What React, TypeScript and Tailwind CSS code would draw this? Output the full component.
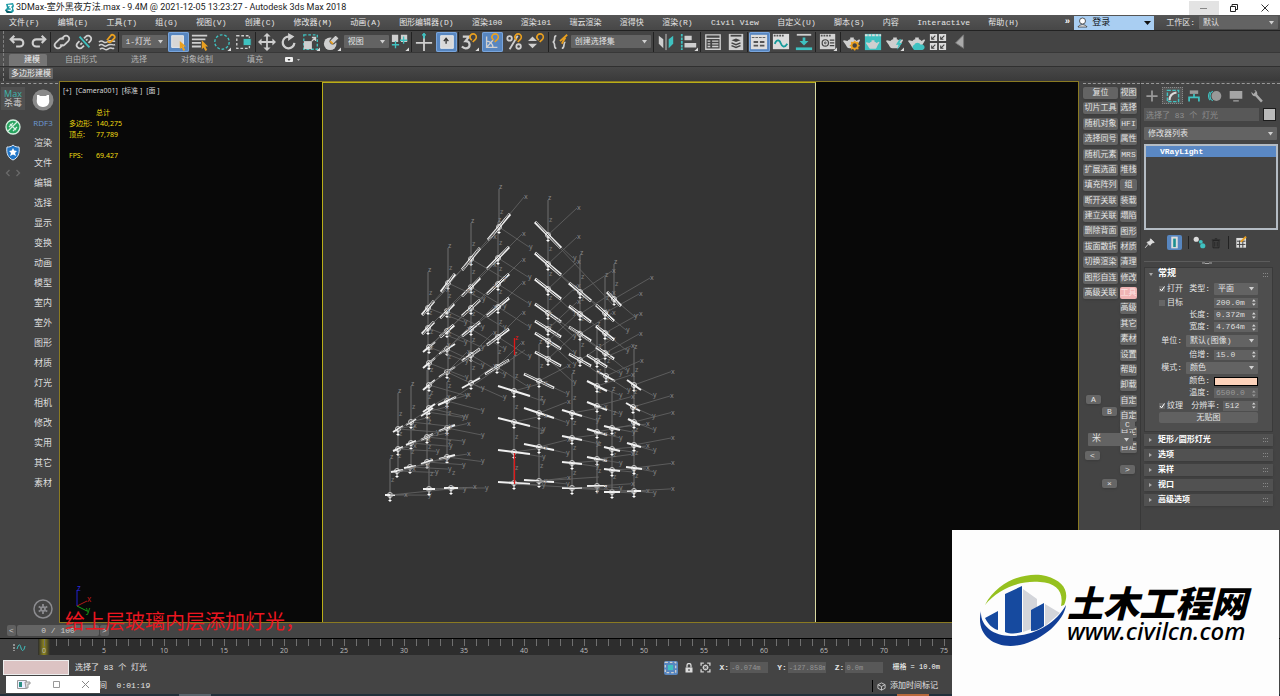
import React from "react";

const TEAL = "#3fc1c0";
const ORANGE = "#e9a020";
const LIGHT = "#cfcfcf";

/* ---------- small shared controls ---------- */

function Icon({ children, size = 18 }: { children: React.ReactNode; size?: number }) {
  return (
    <svg width={size} height={size} viewBox="0 0 20 20" fill="none" stroke={LIGHT} strokeWidth="2" aria-hidden="true" className="shrink-0">
      {children}
    </svg>
  );
}

function Drop({ label, value, className }: { label: string; value: string; className: string }) {
  return (
    <div className={`relative flex items-center ${className}`}>
      <select aria-label={label} className="h-full w-full cursor-default appearance-none rounded-[1px] bg-[#636363] pl-1 pr-2 text-[#e2e2e2] outline-none">
        <option>{value}</option>
      </select>
      <svg width="5" height="4" viewBox="0 0 5 4" className="pointer-events-none absolute right-1" aria-hidden="true">
        <path d="M0 0h5L2.500 3.500z" fill="#d0d0d0" />
      </svg>
    </div>
  );
}

function Tool({ name, active, children }: { name: string; active?: boolean; children: React.ReactNode }) {
  return (
    <button
      type="button"
      title={name}
      className={`flex h-5 w-[21px] shrink-0 items-center justify-center rounded-[2px] ${active ? "bg-[#5786c0] ring-1 ring-inset ring-[#79a5dc]" : ""}`}
    >
      <Icon>{children}</Icon>
    </button>
  );
}

function Group({ className, children }: { className: string; children: React.ReactNode }) {
  return <div className={`flex h-5 shrink-0 items-center justify-around border-r border-[#222] ${className}`}>{children}</div>;
}

const corner = <path d="M20 16v4h-4z" fill="#ddd" stroke="none" />;
const magnet = <path d="M12 8l-1-1a3.500 3.500 0 0 1 5-5 3.500 3.500 0 0 1 0 5l-3 3" stroke={ORANGE} strokeWidth="1.800" />;
const pot = (
  <path d="M5 9c1-3 9-3 10 0l3-2 1 1-3 5c-1 3-2 4-3 4H7c-2 0-3-2-4-4L0 9l1-1 4 1zM8 5h4v2H8z" fill={LIGHT} stroke="none" />
);

/* ---------- top bars ---------- */

const menus = [
  "文件(F)", "编辑(E)", "工具(T)", "组(G)", "视图(V)", "创建(C)", "修改器(M)", "动画(A)", "图形编辑器(D)", "渲染100", "渲染101",
  "瑞云渲染", "渲得快", "渲染(R)", "Civil View", "自定义(U)", "脚本(S)", "内容", "Interactive", "帮助(H)",
];

function TitleBar() {
  return (
    <header className="flex h-[15px] items-center bg-white pl-[5px] text-[#222]">
      <svg width="10" height="10" viewBox="0 0 10 10" aria-hidden="true">
        <path d="M1 1l7-1 1 3-1 2 1 3-2 2H2L0 7l2-2z" fill="#1d9aa4" />
        <path d="M3 2.500h3.500L5 4.500c2 0 2 3 0 3H2.500" stroke="#fff" fill="none" strokeWidth="1.300" />
        <path d="M0 7l2 3h5l-3-2z" fill="#0b5a66" />
      </svg>
      <h1 className="ml-px whitespace-nowrap font-[Roboto,Noto_Sans_CJK_SC,sans-serif] text-[9px] leading-[15px]">
        3DMax-室外黑夜方法.max - 9.4M @ 2021-12-05 13:23:27 - Autodesk 3ds Max 2018
      </h1>
      <div className="ml-auto flex">
        <button type="button" aria-label="最小化" className="flex h-[14px] w-[30px] items-center justify-center bg-[#e3e3e3]">
          <svg width="8" height="8" viewBox="0 0 8 8"><path d="M0 4.500h7" stroke="#888" /></svg>
        </button>
        <button type="button" aria-label="还原" className="flex h-[14px] w-[30px] items-center justify-center">
          <svg width="8" height="8" viewBox="0 0 8 8" fill="none" stroke="#222"><path d="M.5 2.500h5v5h-5zM2 2.500v-2h5.500v5H6" /></svg>
        </button>
        <button type="button" aria-label="关闭" className="flex h-[14px] w-[31px] items-center justify-center">
          <svg width="8" height="8" viewBox="0 0 8 8" stroke="#333"><path d="M.5.5l7 7m0-7l-7 7" /></svg>
        </button>
      </div>
    </header>
  );
}

function MenuBar() {
  return (
    <nav className="flex h-4 items-center border-b border-[#222] bg-gradient-to-b from-[#555] to-[#474747] pl-[9px] text-[#e6e6e6]">
      <div className="flex w-[1010px] justify-between">
        {menus.map((m) => (
          <button key={m} type="button" className="shrink-0 whitespace-nowrap">{m}</button>
        ))}
      </div>
      <div className="ml-auto flex shrink-0 items-center">
        <span className="mr-1 text-[9px] font-bold text-white">»</span>
        <button type="button" className="flex h-[14px] w-20 items-center bg-[#a9cef2] px-[3px] text-[9px] text-[#111]">
          <svg width="11" height="11" viewBox="0 0 11 11" fill="#fff" stroke="#333" strokeWidth=".8" aria-hidden="true">
            <circle cx="5.500" cy="4" r="3" /><path d="M1 10c1-3 8-3 9 0z" />
          </svg>
          <span className="ml-1 mr-auto leading-[14px]">登录</span>
          <svg width="7" height="4" viewBox="0 0 7 4" aria-hidden="true"><path d="M0 0h7L3.500 4z" fill="#111" /></svg>
        </button>
        <span className="ml-3 mr-1 text-[8px]">工作区:</span>
        <Drop label="工作区" value="默认" className="mr-[2px] h-[13px] w-[79px]" />
      </div>
    </nav>
  );
}

function Handle() {
  return <div className="mr-[2px] h-full w-px shrink-0 border-l border-dashed border-[#808080]" />;
}

function Toolbar() {
  return (
    <div className="flex h-[22px] items-center border-b border-[#383838] bg-[#444] pl-[3px]">
      <Handle />
      <Group className="w-[45px]">
        <Tool name="撤消"><path d="M7 3L3 7l4 4M3 7h10a4 4 0 0 1 0 8H9" strokeWidth="2.400" /></Tool>
        <Tool name="重做"><path d="M13 3l4 4-4 4m4-4H7a4 4 0 0 0 0 8h4" strokeWidth="2.400" /></Tool>
      </Group>
      <Group className="w-[68px]">
        <Tool name="链接"><path d="M9 7l3-3a3.500 3.500 0 0 1 5 5l-4 4a3.500 3.500 0 0 1-5 0M11 13l-3 3a3.500 3.500 0 0 1-5-5l4-4a3.500 3.500 0 0 1 5 0" /></Tool>
        <Tool name="取消链接">
          <path d="M10 6l2-2a3.500 3.500 0 0 1 5 5l-2 2M10 14l-2 2a3.500 3.500 0 0 1-5-5l2-2M12 8l2-1M6 13l2-2" />
          <path d="M5 4l11 12" stroke={TEAL} />
        </Tool>
        <Tool name="绑定到空间扭曲">
          <path d="M1 10c5-4 5 3 9 0s6 0 9-1M1 14c5-4 5 3 9 0s6 0 9-1M2 18c5-4 5 3 9 0s4 0 7-1" strokeWidth="1.600" />
          <path d="M10 8l4-5a2 2 0 0 1 4 3l-4 4a2 2 0 0 1-3-1" stroke={ORANGE} />
        </Tool>
      </Group>
      <Group className="w-[137px] pl-[2px]">
        <Drop label="选择过滤器" value="1-灯光" className="h-[13px] w-[45px]" />
        <Tool name="选择对象" active>
          <path d="M3 3h13v13H3z" fill="#d6d6d6" stroke="#eee" strokeWidth="1" />
          <path d="M12 9v9l2-2 2 4 2-1-2-4h3z" fill={ORANGE} stroke="none" />
        </Tool>
        <Tool name="按名称选择">
          <path d="M1 3h17M1 7h15M1 11h10M1 15h10" />
          <path d="M12 8v10l2-2 2 4 2-1-2-4h3z" fill={ORANGE} stroke="none" />
        </Tool>
        <Tool name="圆形选择区域"><circle cx="10" cy="10" r="8" stroke={TEAL} strokeWidth="1.500" strokeDasharray="3 2" />{corner}</Tool>
        <Tool name="窗口/交叉">
          <path d="M2 3h14v14H2z" strokeWidth="1.500" strokeDasharray="3 2" />
          <path d="M9 6h9v8H9z" fill={TEAL} stroke="#444" strokeWidth="1" />
        </Tool>
      </Group>
      <Group className="w-[156px]">
        <Tool name="移动"><path d="M10 2v16M2 10h16" /><path d="M10 0l4 4H6zM10 20l4-4H6zM0 10l4-4v8zM20 10l-4-4v8z" fill={LIGHT} stroke="none" /></Tool>
        <Tool name="旋转"><path d="M16 11a6.500 6.500 0 1 1-6-7" strokeWidth="2.500" /><path d="M9 0l7 4-7 5z" fill={LIGHT} stroke="none" /></Tool>
        <Tool name="缩放">
          <path d="M2 2h15v16H2z" stroke={TEAL} strokeDasharray="3 2" strokeWidth="1.500" />
          <path d="M2 9h9v9H2z" fill={LIGHT} stroke="none" /><path d="M11 9l4-4m-4 0h4v4" strokeWidth="1.500" />{corner}
        </Tool>
        <Tool name="放置"><circle cx="8" cy="12" r="7" fill={LIGHT} stroke="none" /><path d="M8 8l6-6 4 4-6 6c-3 1-5-2-4-4z" fill={LIGHT} stroke="#444" strokeWidth="1.200" /><path d="M8 9l3 3" stroke={ORANGE} />{corner}</Tool>
        <Drop label="参考坐标系" value="视图" className="h-[13px] w-[45px]" />
        <Tool name="使用轴点中心">
          <path d="M1 2h7v8H1zM11 2h7v8h-7z" fill={LIGHT} stroke="none" />
          <path d="M5 9v8M1 13h8M14 4v8M10 8h8" stroke={TEAL} strokeWidth="1.500" />{corner}
        </Tool>
      </Group>
      <Group className="w-[47px]">
        <Tool name="选择并操纵"><path d="M1 11h18M10 3v17" /><path d="M10 0v6M8 2h4" stroke={TEAL} /></Tool>
        <Tool name="键盘快捷键覆盖" active><path d="M3 3h14v14H3z" fill="#d9d9d9" stroke="#eee" strokeWidth="1" /><path d="M9 12V7M6.500 9L9 6l2.500 3" stroke="#333" strokeWidth="1.500" /></Tool>
      </Group>
      <Group className="w-[90px]">
        <Tool name="捕捉开关"><path d="M2 4h7L5 9c6 0 6 8 0 8-2 0-3-1-4-2" strokeWidth="2.500" />{magnet}{corner}</Tool>
        <Tool name="角度捕捉" active><path d="M4 4v12h12M4 9c4 0 7 3 7 7M4 16l7-8" strokeWidth="1.500" />{magnet}</Tool>
        <Tool name="百分比捕捉"><circle cx="4" cy="6" r="2.500" /><circle cx="14" cy="15" r="2.500" /><path d="M13 3L4 18" />{magnet}</Tool>
        <Tool name="微调器捕捉"><path d="M5 4l5 5H0zM5 17l5-5H0z" fill={LIGHT} stroke="none" />{magnet}</Tool>
      </Group>
      <Group className="w-[105px]">
        <Tool name="编辑命名选择集"><path d="M6 3C2 3 6 9 2 10c4 1 0 7 4 7M12 17c4 0 1-6 4-7" strokeWidth="1.800" /><path d="M10 9l8-7M12 12l4-7" stroke={ORANGE} /></Tool>
        <Drop label="命名选择集" value="创建选择集" className="mr-[2px] h-[13px] w-20" />
      </Group>
      <Group className="w-[47px]">
        <Tool name="镜像"><path d="M2 3l5 4v10l-5-5z" fill={LIGHT} stroke="none" /><path d="M18 3l-5 4v10l5-5z" fill={TEAL} stroke="none" /><path d="M10 1v18" strokeWidth="1" /></Tool>
        <Tool name="对齐"><path d="M2 1v18" stroke={TEAL} strokeDasharray="3 1" /><path d="M5 3h8v5H5zM5 11h13v5H5z" fill={LIGHT} stroke="none" />{corner}</Tool>
      </Group>
      <Group className="w-[47px]">
        <Tool name="场景资源管理器"><path d="M2 2h16v16H2zM2 6h16M4 9h3M9 9h7M4 12h3M9 12h7M4 15h3M9 15h7" strokeWidth="1.500" /></Tool>
        <Tool name="层资源管理器"><path d="M2 1h16v18H2z" fill={LIGHT} stroke="none" /><path d="M4 3h12" stroke="#444" /><path d="M10 6l5 2-5 2-5-2z" fill="#444" stroke="none" /><path d="M5 11l5 2 5-2M5 14l5 2 5-2" stroke="#444" strokeWidth="1.600" /></Tool>
      </Group>
      <Group className="w-[68px]">
        <Tool name="功能区" active><path d="M1 2h18v16H1z" fill="#ddd" stroke="none" /><path d="M2 5h16" stroke="#555" strokeWidth="1" strokeDasharray="3 1" /><path d="M4 10h5M11 10h5M4 14h5M11 14h5" stroke="#555" /></Tool>
        <Tool name="曲线编辑器"><path d="M1 1h18v17H1z" fill="#ddd" stroke="none" /><path d="M2 3h12" stroke="#555" strokeDasharray="2 1" /><path d="M3 12c3-7 6-3 7 0s4 5 7 0" stroke="#159b9b" /></Tool>
        <Tool name="图解视图"><path d="M2 1h16v2H2z" fill={LIGHT} stroke="none" /><path d="M1 16h18v3H1z" fill={TEAL} stroke="none" /><path d="M10 5v6" strokeWidth="3" stroke={TEAL} /><path d="M5 9h10l-5 5z" fill={TEAL} stroke="none" /></Tool>
      </Group>
      <Group className="w-[25px]">
        <Tool name="材质编辑器"><path d="M1 1h17v17H1z" fill="#d3d3d3" stroke="none" /><path d="M2 3h11" stroke="#555" strokeDasharray="2 1" /><circle cx="7" cy="11" r="3.500" stroke="#444" strokeWidth="1.300" /><circle cx="7" cy="11" r="1" stroke="#444" strokeWidth="1" /><path d="M12 8h5M12 11h5M12 14h5" stroke="#444" strokeWidth="1.300" />{corner}</Tool>
      </Group>
      <div className="flex w-[130px] shrink-0 items-center justify-around">
        <Tool name="渲染设置">{pot}<circle cx="13" cy="14" r="3.500" stroke={ORANGE} fill="#444" /><path d="M13 8.500v2M13 17.500v2M7.500 14h2M16.500 14h2M9 10l1.500 1.500M15.500 16.500L17 18M17 10l-1.500 1.500M10.500 16.500L9 18" stroke={ORANGE} strokeWidth="1.500" /></Tool>
        <Tool name="渲染帧窗口"><path d="M1 1h18v18H1z" fill={TEAL} stroke="none" /><path d="M1 2.500h18" stroke="#ddd" strokeDasharray="3 1" /><g transform="translate(2 4) scale(.8)">{pot}</g></Tool>
        <Tool name="渲染产品">{pot}<path d="M15 7l-4 6h3l-2 6 6-8h-3l2-4z" fill={TEAL} stroke="none" />{corner}</Tool>
        <Tool name="在云中渲染">{pot}<path d="M6 18a3 3 0 0 1 1-5c1-3 6-3 7 0 5-1 6 5 2 6H7z" fill={TEAL} stroke="none" /></Tool>
        <Tool name="打开 A360"><path d="M1 1h8v8H1zM11 1h8v8h-8zM1 11h8v8H1zM11 11h8v8h-8z" fill="#ddd" stroke="none" /><path d="M3 7l4-4M3 4v3h3M13 7l4-4M13 4v3h3M3 17l4-4M3 14v3h3M13 17l4-4M13 14v3h3" stroke="#444" strokeWidth="1.200" /></Tool>
        <Tool name="播放"><path d="M14 2L5 11l9 6z" fill="#aaa" stroke="#777" strokeWidth="1" /></Tool>
      </div>
    </div>
  );
}

function Ribbon() {
  const tabs = ["自由形式", "选择", "对象绘制", "填充"];
  return (
    <section className="text-[8px]">
      <div className="flex h-[13px] items-center bg-[#525252] pl-[3px] text-[#b5b5b5]">
        <Handle />
        <button type="button" className="ml-[3px] h-[12px] w-[38px] rounded-t-[2px] bg-[#757575] pl-2 text-[#f0f0f0]">建模</button>
        <div className="ml-[18px] flex gap-[34px]">
          {tabs.map((t) => <button key={t} type="button" className="shrink-0">{t}</button>)}
        </div>
        <button type="button" aria-label="功能区选项" className="ml-[22px] flex items-center gap-1">
          <svg width="16" height="6" viewBox="0 0 16 6"><rect width="8" height="5" rx="1" fill="#eee" /><path d="M2.500 2h3L4 4z" fill="#333" /><path d="M12 2h3l-1.500 2z" fill="#bbb" /></svg>
        </button>
      </div>
      <div className="flex h-[15px] items-start border-t border-[#303030] bg-gradient-to-b from-[#484848] to-[#3a3a3a] pl-[3px] pt-px">
        <Handle />
        <button type="button" className="ml-[3px] h-[11px] w-[44px] rounded-[1px] bg-[#666] leading-[11px] text-[#eee]">多边形建模</button>
      </div>
    </section>
  );
}

/* ---------- left side ---------- */

const leftMenu = ["渲染", "文件", "编辑", "选择", "显示", "变换", "动画", "模型", "室内", "室外", "图形", "材质", "灯光", "相机", "修改", "实用", "其它", "素材"];

function Grip() {
  return <div className="h-px w-full border-t border-dashed border-[#999]" />;
}

function LeftBars() {
  return (
    <aside className="flex shrink-0 bg-[#444] pl-px pt-[2px]">
      <div className="flex w-6 flex-col items-center">
        <Grip />
        <button type="button" className="mt-[3px] flex h-[23px] w-6 flex-col items-center justify-center bg-[#505050] text-[9px] leading-[11px] text-[#ccc]">
          <span className="font-[Open_Sans,sans-serif] text-[#3fb5ad]">Max</span>
          <span>杀毒</span>
        </button>
        <button type="button" aria-label="病毒查杀" className="mt-2">
          <svg width="18" height="18" viewBox="0 0 18 18"><circle cx="9" cy="9" r="7" fill="#27a35f" stroke="#d5efe0" strokeWidth="1.300" /><path d="M4 13l9-9M5 9l4-4M9 13l4-4M6 6l6 6" stroke="#d5efe0" strokeWidth="1.200" /></svg>
        </button>
        <button type="button" aria-label="防护" className="mt-2">
          <svg width="16" height="17" viewBox="0 0 16 17"><path d="M8 1c2 2 4 2 6 2 1 6-1 11-6 13C3 14 1 9 2 3c2 0 4 0 6-2z" fill="#2176c7" stroke="#d8e6f4" /><path d="M8 4l1.200 2.500L12 7l-2 2 1 3-3-1.500L5 12l1-3-2-2 2.800-.5z" fill="#fff" /></svg>
        </button>
        <div className="mt-2 flex gap-1">
          <svg width="16" height="8" viewBox="0 0 16 8" fill="none" stroke="#6a6a6a" strokeWidth="1.300"><path d="M4.500 1l-3 3 3 3M11.500 1l3 3-3 3" /></svg>
        </div>
      </div>
      <div className="ml-[3px] mr-px flex w-[30px] flex-col items-center">
        <Grip />
        <svg width="22" height="22" viewBox="0 0 22 22" className="mt-[5px]" aria-hidden="true">
          <circle cx="11" cy="11" r="10.500" fill="#8a8a8a" />
          <path d="M5 6h2l1 1h6l1-1h2v4c1 4-1 8-6 8s-7-4-6-8z" fill="#fff" />
        </svg>
        <span className="mt-1 h-[19px] font-[Open_Sans,sans-serif] text-[8px] leading-[16px] text-[#6c9ad6]">RDF3</span>
        {leftMenu.map((t) => (
          <button key={t} type="button" className="h-5 text-[9px] leading-5 text-[#dedede]">{t}</button>
        ))}
        <button type="button" aria-label="设置" className="mb-1 mt-auto">
          <svg width="20" height="20" viewBox="0 0 20 20" fill="none" stroke="#8c8c90"><circle cx="10" cy="10" r="9" strokeWidth="1.500" /><circle cx="10" cy="10" r="2" strokeWidth="1.800" /><path d="M10 5v2.500M10 12.500V15M5.700 7.500l2.200 1.300M12.100 11.200l2.200 1.300M5.700 12.500l2.200-1.300M12.100 8.800l2.200-1.300" strokeWidth="1.800" /></svg>
        </button>
      </div>
    </aside>
  );
}

/* ---------- viewport ---------- */

type Column = { top: number; xv: [number, number]; yv: [number, number]; bars: [number, number, number, number][] };

// each bar: centre x, centre y, half extent along x, half extent along y
const columns: Column[] = [
  { top: 189, xv: [25, -30], yv: [30, 20], bars: [[499, 227, 11, -13]] },
  { top: 222, xv: [24, -24], yv: [30, 19], bars: [[498, 258, 11, -11], [498, 284, 11, -10], [498, 307, 11, -9], [498, 337, 11, -8], [497, 367, 12, -7]] },
  { top: 223, xv: [22, -22], yv: [32, 19], bars: [[471, 259, 9, -11], [471, 287, 9, -9], [471, 308, 9, -8], [471, 329, 9, -7], [471, 355, 9, -6], [471, 383, 9, -5]] },
  { top: 248, xv: [20, -20], yv: [34, 16], bars: [[448, 283, 7, -9], [447, 311, 7, -7], [447, 331, 7, -6], [447, 349, 8, -5], [447, 372, 8, -5]] },
  { top: 382, xv: [20, -9], yv: [34, 14], bars: [[447, 401, 9, -4], [447, 428, 8, -3], [447, 457, 8, -2]] },
  { top: 272, xv: [18, -18], yv: [36, 14], bars: [[428, 308, 6, -7], [428, 328, 6, -6], [429, 347, 6, -5], [429, 363, 6, -5], [429, 385, 6, -5], [429, 408, 6, -4]] },
  { top: 370, xv: [18, -8], yv: [35, 9], bars: [[427, 412, 6, -4], [427, 437, 6, -3], [427, 462, 6, -2]] },
  { top: 386, xv: [16, -8], yv: [38, 8], bars: [[411, 422, 5, -3], [411, 443, 5, -2], [410, 467, 6, -1]] },
  { top: 393, xv: [15, -7], yv: [38, 6], bars: [[398, 429, 5, -3], [398, 449, 5, -2], [397, 471, 6, -1]] },
  { top: 459, xv: [14, -4], yv: [38, 1], bars: [[390, 495, 5, 0]] },
  { top: 462, xv: [22, -5], yv: [34, 0], bars: [[429, 489, 6, 0], [451, 488, 7, 0]] },
  { top: 200, xv: [29, -27], yv: [25, 23], bars: [[548, 235, 13, 13], [548, 264, 13, 11], [548, 289, 13, 10], [548, 313, 13, 9], [548, 329, 13, 8], [548, 341, 13, 8], [548, 359, 13, 7]] },
  { top: 255, xv: [32, -21], yv: [26, 19], bars: [[580, 292, 11, 9], [580, 314, 11, 8], [580, 334, 11, 7], [580, 360, 11, 6]] },
  { top: 277, xv: [34, -19], yv: [21, 17], bars: [[605, 313, 9, 8], [605, 333, 9, 7], [605, 353, 9, 6], [606, 376, 9, 5]] },
  { top: 264, xv: [36, -21], yv: [20, 17], bars: [[614, 299, 7, 7]] },
  { top: 326, xv: [34, -15], yv: [22, 12], bars: [[597, 361, 10, 6], [597, 386, 10, 5], [597, 406, 10, 4], [597, 432, 10, 3], [597, 459, 10, 2], [597, 486, 10, 0]] },
  { top: 344, xv: [28, -19], yv: [27, 16], bars: [[539, 381, 15, 7], [539, 413, 15, 5], [539, 447, 15, 3], [539, 481, 15, 1]] },
  { top: 356, xv: [30, -12], yv: [28, 14], bars: [[514, 391, 16, 5], [514, 422, 16, 4], [514, 452, 16, 2], [514, 483, 16, 1]] },
  { top: 374, xv: [32, -10], yv: [24, 12], bars: [[572, 413, 10, 3], [572, 438, 10, 2], [572, 463, 10, 1], [572, 488, 10, 0]] },
  { top: 391, xv: [34, -8], yv: [20, 8], bars: [[612, 428, 8, 2], [612, 449, 8, 2], [612, 470, 8, 1], [612, 492, 8, 0]] },
  { top: 349, xv: [37, -18], yv: [19, 14], bars: [[634, 385, 7, 5], [633, 407, 7, 4], [634, 422, 6, 3], [634, 445, 7, 2], [634, 468, 8, 1], [634, 491, 7, 0]] },
];

function Light({ bar, xv, yv }: { bar: [number, number, number, number]; xv: [number, number]; yv: [number, number] }) {
  const [x, y, dx, dy] = bar;
  // axes flatten out towards the horizon at the bottom of the model
  const flat = y > 375 ? Math.max(0.1, 0.8 - (y - 375) / 170) : 1;
  const xe = [x + xv[0], y + xv[1] * flat];
  const ye = [x + yv[0], y + yv[1] * flat];
  const steep = Math.abs(dy) > 5;
  return (
    <g>
      <path d={`M${xe[0]} ${xe[1]}L${x} ${y}L${ye[0]} ${ye[1]}`} stroke="#666" strokeWidth=".8" fill="none" />
      <text x={xe[0]} y={xe[1] + 2} fill="#858585" fontSize="7">x</text>
      <text x={ye[0]} y={ye[1] + 2} fill="#858585" fontSize="7">y</text>
      <text x={x + 1} y={y - 13} fill="#7c7c7c" fontSize="7">z</text>
      <path d={`M${x - dx} ${y - dy}L${x + dx} ${y + dy}`} stroke="#f0f0f0" strokeWidth={steep ? 3 : 2} />
      {steep && <path d={`M${x - dx + 1} ${y - dy}L${x + dx - 1} ${y + dy}`} stroke="#454545" strokeWidth="1" />}
      <circle cx={x} cy={y} r="2.500" stroke="#eee" strokeWidth=".8" fill="none" />
      <path d={`M${x} ${y}v7M${x - 1.5} ${y + 5.5}h3`} stroke="#fff" strokeWidth="1" />
    </g>
  );
}

function Viewport() {
  return (
    <main className="relative flex min-w-0 flex-1 border border-[#8a7a22] bg-[#080808]">
      <div className="flex min-w-0 flex-1 flex-col justify-between pl-[3px] pt-1 font-[Noto_Sans,Noto_Sans_CJK_SC,sans-serif]">
        <div>
          <div className="flex gap-1 text-[7px] leading-[10px] text-[#d8d8d8]">
            <span>[+]</span><span>[Camera001]</span><span>[标准 ]</span><span>[面 ]</span>
          </div>
          <table className="ml-[6px] mt-[11px] text-left text-[7px] leading-[11px] text-[#f0dc10]">
            <tbody>
              <tr><td className="w-[27px]" /><td>总计</td></tr>
              <tr><td className="whitespace-nowrap">多边形:</td><td>140,275</td></tr>
              <tr><td>顶点:</td><td>77,789</td></tr>
              <tr><td className="h-[10px]" /></tr>
              <tr><td>FPS:</td><td>69.427</td></tr>
            </tbody>
          </table>
        </div>
        <svg width="28" height="38" viewBox="0 0 28 38" className="mb-[3px] ml-[9px]" fill="none" aria-hidden="true">
          <path d="M5 25V9" stroke="#2020d0" /><path d="M5 25l10-5" stroke="#b01818" /><path d="M5 25l10 5" stroke="#18a018" />
          <text x="5" y="10" fill="#2828e0" fontSize="8">z</text><text x="15" y="21" fill="#c01818" fontSize="8">x</text><text x="14" y="32" fill="#18b018" fontSize="8">y</text>
        </svg>
      </div>
      <div className="w-[494px] shrink-0 border-x border-t border-[#b9ae18] border-r-[#d8d8a0] bg-[#343434]">
        <svg viewBox="323 83 492 539" className="block h-full w-full font-[Noto_Sans,sans-serif]" role="img" aria-label="Camera001">
          {columns.map((c, i) => {
            const first = c.bars[0];
            const last = c.bars[c.bars.length - 1];
            return (
              <g key={i}>
                <path d={`M${first[0]} ${c.top}V${last[1]}`} stroke="#6e6e6e" strokeWidth="1" />
                <text x={first[0]} y={c.top} fill="#8a8a8a" fontSize="7">z</text>
              </g>
            );
          })}
          {columns.map((c) => c.bars.map((b) => <Light key={`${b[0]}-${b[1]}`} bar={b} xv={c.xv} yv={c.yv} />))}
          <path d="M448 402L525 350M398 430l30-20M398 450l49-22M397 472l50-15M390 495l60-6M499 227L428 308M498 258l-70 70M498 284l-69 63M498 307l-69 56M498 337l-69 48M548 235l66 71M548 264l57 49M548 313l57 40M514 484l120 7M539 481l60-4" stroke="#666" strokeWidth=".8" />
          <path d="M514.500 338V355M514.500 453V484" stroke="#e01818" strokeWidth="1.300" />
          <text x="515" y="340" fill="#e01818" fontSize="7">z</text>
        </svg>
      </div>
      <div className="min-w-0 flex-1 pl-[3px]" />
      <p className="absolute -bottom-[13px] left-[5px] z-10 whitespace-nowrap font-[Noto_Sans_CJK_SC,sans-serif] text-[20px] leading-[28px] text-[#ea1620]">给上层玻璃内层添加灯光，</p>
    </main>
  );
}

/* ---------- right side ---------- */

const scriptsA = ["复位", "切片工具", "随机对象", "选择同号", "随机元素", "扩展选面", "填充阵列", "断开关联", "建立关联", "删除背面", "拔面散拆", "切换渲染", "图形自连", "高级关联"];
const scriptsB = ["视图", "选择", "HFI", "属性", "MRS", "堆栈", "组", "装载", "塌陷", "图形", "材质", "清理", "修改", "工具", "高级", "其它", "素材", "设置", "帮助", "卸载", "自定", "自定", "自定", "自定"];

const mini = "absolute flex h-[9px] w-[15px] items-center justify-center rounded-[2px] bg-[#666] text-[8px] leading-[9px] text-[#e0e0e0] shadow";

function ScriptBar() {
  const key = "h-3 rounded-[2px] bg-[#646464] text-[8px] leading-3 whitespace-nowrap overflow-hidden shadow-sm";
  return (
    <aside className="relative w-[61px] shrink-0 bg-[#444] pl-1 pt-[2px]">
      <Grip />
      <div className="mt-[3px] flex gap-[2px]">
        <div className="flex h-[212px] w-[35px] flex-col justify-between">
          {scriptsA.map((s) => <button key={s} type="button" className={`${key} text-[#e4e4e4]`}>{s}</button>)}
        </div>
        <div className="flex h-[366px] w-[17px] flex-col justify-between">
          {scriptsB.map((s, i) => (
            <button key={i} type="button" className={s === "工具" ? "h-3 overflow-hidden whitespace-nowrap rounded-[2px] bg-[#f0b4b4] text-[8px] leading-3 text-[#fde4e4]" : `${key} text-[#e4e4e4]`}>{s}</button>
          ))}
        </div>
      </div>
      <button type="button" className={`${mini} left-[7px] top-[314px]`}>A</button>
      <button type="button" className={`${mini} left-[23px] top-[326px]`}>B</button>
      <button type="button" className={`${mini} left-[41px] top-[339px]`}>C</button>
      <div className="absolute left-[9px] top-[352px]"><Drop label="单位" value="米" className="h-[13px] w-[45px] text-[9px]" /></div>
      <button type="button" className={`${mini} left-[6px] top-[370px]`}>&lt;</button>
      <button type="button" className={`${mini} left-[41px] top-[384px]`}>&gt;</button>
      <button type="button" className={`${mini} left-[23px] top-[398px]`}>×</button>
    </aside>
  );
}

function Spin({ id, value, className, dim }: { id: string; value: string; className: string; dim?: boolean }) {
  return (
    <div className={`flex h-[10px] items-center bg-[#616161] px-[2px] ${className}`}>
      <input id={id} defaultValue={value} disabled={dim} className={`w-full min-w-0 bg-transparent text-[8px] leading-[10px] outline-none ${dim ? "text-[#999]" : "text-[#dedede]"}`} />
      <svg width="4" height="7" viewBox="0 0 4 7" aria-hidden="true" fill={dim ? "#999" : "#d8d8d8"}><path d="M0 2.500L2 0l2 2.500zM0 4.500h4L2 7z" /></svg>
    </div>
  );
}

function Row({ label, id, children, h }: { label: string; id: string; children: React.ReactNode; h: string }) {
  return (
    <div className={`flex items-center justify-end gap-1 ${h}`}>
      <label htmlFor={id} className="text-[8px]">{label}:</label>
      {children}
    </div>
  );
}

function Dots() {
  return (
    <svg width="5" height="4" viewBox="0 0 5 4" className="ml-auto" fill="#888" aria-hidden="true"><path d="M0 0h1v1H0zM2 0h1v1H2zM4 0h1v1H4zM0 3h1v1H0zM2 3h1v1H2zM4 3h1v1H4z" /></svg>
  );
}

function Tick({ id, label, on }: { id: string; label: string; on?: boolean }) {
  return (
    <span className="mr-auto flex shrink-0 items-center gap-[2px] whitespace-nowrap">
      <span className="relative flex size-[6px]">
        <input id={id} type="checkbox" defaultChecked={on} className="peer size-[6px] appearance-none bg-[#666]" />
        <svg viewBox="0 0 6 6" className="pointer-events-none absolute inset-0 hidden peer-checked:block" fill="none" stroke="#fff"><path d="M1 3l1.500 2L5.500.5" /></svg>
      </span>
      <label htmlFor={id} className="text-[8px]">{label}</label>
    </span>
  );
}

function CommandPanel() {
  const tab = "flex h-[17px] w-[21px] items-center justify-center";
  return (
    <aside className="w-[140px] shrink-0 border-l border-[#383838] bg-[#444] pt-[2px] text-[#e4e4e4]">
      <Grip />
      <div className="mt-[3px] flex">
        <button type="button" aria-label="创建" className={tab}><Icon size={14}><path d="M10 2v16M2 10h16" stroke="#999" strokeWidth="2.500" /></Icon></button>
        <button type="button" aria-label="修改" className={`${tab} border border-dotted border-[#888] bg-[#555]`}><Icon size={14}><path d="M2 2h16v16H2z" stroke={TEAL} strokeDasharray="5 2" /><path d="M5 16c0-6 4-10 10-11" stroke="#ddd" strokeWidth="3" /></Icon></button>
        <button type="button" aria-label="层次" className={tab}><Icon size={14}><path d="M4 2h12v5H4z" fill="#999" stroke="none" /><path d="M10 7v5M3 18v-6h14v6" stroke={TEAL} strokeWidth="2.500" /></Icon></button>
        <button type="button" aria-label="运动" className={tab}><Icon size={14}><circle cx="12" cy="10" r="7" fill="#999" stroke="none" /><path d="M7 3a8 8 0 0 0 0 14M3 4a9 9 0 0 0 0 12" stroke={TEAL} strokeWidth="1.500" /></Icon></button>
        <button type="button" aria-label="显示" className={tab}><Icon size={14}><path d="M1 3h18v11H1zM6 16h8v2H6z" fill="#a5a5a5" stroke="none" /></Icon></button>
        <button type="button" aria-label="实用程序" className={tab}><Icon size={14}><path d="M7 7l10 11" stroke="#aaa" strokeWidth="3.500" /><path d="M2 4l3 3 3-3-2-3a6 6 0 0 1 4 8c-3 3-8 1-8-5z" fill="#aaa" stroke="none" /></Icon></button>
      </div>
      <div className="pl-[3px]">
        <div className="mr-1 mt-1 flex items-center gap-1">
          <input aria-label="对象名称" disabled defaultValue="选择了 83 个 灯光" className="h-[13px] min-w-0 flex-1 bg-[#585858] px-[2px] text-[8px] text-[#8f8f8f]" />
          <button type="button" aria-label="对象颜色" className="size-[13px] border border-[#1c1c1c] bg-[#b9b9b9]" />
        </div>
        <Drop label="修改器列表" value="修改器列表" className="mr-[3px] mt-[6px] h-[13px] text-[8px]" />
        <ul className="mr-[2px] mt-1 h-[86px] border-2 border-[#b4bcc4] bg-[#444] text-[8px]">
          <li className="h-[11px] bg-[#5a88c4] pl-[14px] font-bold leading-[11px] text-white">VRayLight</li>
        </ul>
        <div className="mr-[10px] mt-1 flex h-[17px] items-center">
          <button type="button" aria-label="锁定堆栈" className="w-[17px]"><Icon size={12}><path d="M11 3l6 6-4 1-3 4-5-5 5-2zM7 12l-5 6" fill="#ddd" stroke="#ddd" strokeWidth="1.500" /></Icon></button>
          <button type="button" aria-label="显示最终结果" className="ml-[6px] flex h-[15px] w-[15px] items-center justify-center rounded-[2px] bg-[#5786c0]"><Icon size={13}><path d="M5 1h10v18H5z" fill="#ddd" stroke="none" /><path d="M10 4v13" stroke="#1b8f90" strokeWidth="4" /></Icon></button>
          <button type="button" aria-label="使唯一" className="ml-[6px] border-l border-[#222] pl-1"><Icon size={13}><circle cx="5" cy="5" r="4" fill="#ddd" stroke="none" /><circle cx="12" cy="9" r="3" fill={TEAL} stroke="none" /><circle cx="15" cy="15" r="4" fill={TEAL} stroke="none" /></Icon></button>
          <button type="button" aria-label="移除修改器" className="ml-1"><Icon size={12}><path d="M3 5h14M8 3h4M5 6h10v12H5zM8 8v8M12 8v8" stroke="#222" strokeWidth="1.500" /></Icon></button>
          <button type="button" aria-label="配置修改器集" className="ml-[6px] border-l border-[#222] pl-[6px]"><Icon size={13}><path d="M2 3h15v15H2z" fill="#ddd" stroke="none" /><path d="M3 8h13M3 13h13M7 7v11M12 7v11" stroke="#444" strokeWidth="1.500" /><path d="M9 9l8-8" stroke={ORANGE} strokeWidth="3" /></Icon></button>
        </div>
        <div className="mr-[10px] mt-[10px] flex h-1 items-center justify-center border-t border-[#5c5c5c]">
          <svg width="10" height="3" viewBox="0 0 10 3" fill="none" stroke="#aaa"><path d="M0 1h3l1 1 1-1 1 1 1-1h3" /></svg>
        </div>

        <section className="mr-[7px] mt-[2px] h-[165px] border border-[#3a3a3a] bg-[#4e4e4e]">
          <h2 className="flex h-[13px] items-center gap-[5px] px-1 text-[9px] font-bold text-white">
            <svg width="4" height="4" viewBox="0 0 4 4" fill="#aaa"><path d="M0 0h4L2 3z" /></svg>常规<Dots />
          </h2>
          <div className="px-[14px]">
            <div className="flex h-[15px] items-center gap-1">
              <Tick id="on" label="打开" on />
              <span className="shrink-0 text-[8px]">类型:</span>
              <Drop label="类型" value="平面" className="h-3 w-[44px] shrink-0 text-[8px]" />
            </div>
            <div className="flex h-[13px] items-center">
              <Tick id="target" label="目标" />
              <Spin id="dist" value="200.0m" className="w-[44px]" />
            </div>
            <Row label="长度" id="len" h="h-3"><Spin id="len" value="0.372m" className="w-[44px]" /></Row>
            <Row label="宽度" id="wid" h="h-3"><Spin id="wid" value="4.764m" className="w-[44px]" /></Row>
            <Row label="单位" id="unit" h="h-[15px]"><Drop label="单位类型" value="默认(图像)" className="h-3 w-[72px] text-[8px]" /></Row>
            <Row label="倍增" id="mul" h="h-[13px]"><Spin id="mul" value="15.0" className="w-[44px]" /></Row>
            <Row label="模式" id="mode" h="h-[14px]"><Drop label="颜色模式" value="颜色" className="h-3 w-[72px] text-[8px]" /></Row>
            <Row label="颜色" id="col" h="h-3"><button id="col" type="button" aria-label="颜色" className="h-[9px] w-[44px] border border-black bg-[#fdd3bb]" /></Row>
            <Row label="温度" id="temp" h="h-3"><Spin id="temp" value="6500.0" className="w-[44px]" dim /></Row>
            <div className="flex h-[13px] items-center gap-[3px]">
              <Tick id="tex" label="纹理" on />
              <label htmlFor="res" className="shrink-0 text-[8px]">分辨率:</label>
              <Spin id="res" value="512" className="w-[35px] shrink-0" />
            </div>
            <button type="button" className="block h-[11px] w-full rounded-[2px] bg-[#616161] text-[8px] leading-[11px]">无贴图</button>
          </div>
        </section>
        <div className="mr-[7px] mt-[2px] flex flex-col gap-[3px]">
          {["矩形/圆形灯光", "选项", "采样", "视口", "高级选项"].map((r) => (
            <button key={r} type="button" className="flex h-3 items-center gap-[5px] bg-[#515151] px-[5px] text-[8px] font-bold text-white shadow-sm">
              <svg width="4" height="4" viewBox="0 0 4 4" fill="#aaa"><path d="M0 0l3 2-3 2z" /></svg>{r}<Dots />
            </button>
          ))}
        </div>
      </div>
    </aside>
  );
}

/* ---------- bottom bars ---------- */

function TimeBars() {
  return (
    <section className="bg-[#444]">
      <div className="flex h-[15px] items-center gap-px pl-[7px] text-[8px] text-[#ccc]">
        <button type="button" aria-label="上一帧" className="h-[11px] w-[9px] rounded-[2px] bg-[#606060] leading-[10px]">&lt;</button>
        <div className="h-[11px] w-[82px] rounded-[2px] bg-[#646464] text-center leading-[11px]">0 / 100</div>
        <button type="button" aria-label="下一帧" className="h-[11px] w-[9px] rounded-[2px] bg-[#606060] leading-[10px]">&gt;</button>
      </div>
      <div className="flex h-[17px] items-stretch border-t border-black">
        <button type="button" aria-label="迷你曲线编辑器" className="flex w-[38px] items-center pl-[13px]">
          <svg width="13" height="9" viewBox="0 0 13 9" fill="none"><path d="M1 1v7" stroke="#aaa" strokeWidth="1.500" strokeDasharray="2 1" /><path d="M4 6c2-6 3-5 4-1s3 3 4-2" stroke={TEAL} /></svg>
        </button>
        <div className="mr-[30px] flex min-w-0 flex-1 bg-[#2d2d2d] font-[Open_Sans,sans-serif] text-[7px] text-[#bdbdbd]">
          {Array.from({ length: 101 }, (_, i) => (
            <div key={i} className={`flex min-w-0 flex-1 flex-col items-center ${i === 0 ? "bg-gradient-to-r from-transparent via-[#8e861d] to-transparent" : ""}`}>
              <div className="h-[7px] w-px shrink-0 bg-[#707070]" />
              {i % 5 === 0 && <span className="w-4 shrink-0 text-center leading-[9px]">{i}</span>}
            </div>
          ))}
        </div>
      </div>
    </section>
  );
}

function Coord({ axis, value }: { axis: string; value: string }) {
  return (
    <label className="flex items-center gap-px">
      <span className="text-[8px] font-bold">{axis}:</span>
      <input disabled defaultValue={value} className="h-[11px] w-[38px] bg-[#585858] px-px text-[7px] text-[#959595]" />
    </label>
  );
}

function StatusBar() {
  return (
    <footer className="relative h-[41px] bg-[#444] text-[8px] text-[#e4e4e4]">
      <div className="flex h-[23px] items-center pl-[3px] pt-[2px]">
        <div className="h-[15px] w-[66px] border border-[#eee] bg-[#dcc3c3]" />
        <p className="ml-[6px]">选择了 83 个 灯光</p>
        <div className="ml-auto mr-[340px] flex shrink-0 items-center gap-[9px]">
          <div className="flex items-center gap-[6px]">
            <button type="button" aria-label="隔离" className="flex size-[14px] items-center justify-center rounded-[2px] bg-[#5786c0]"><Icon size={13}><path d="M2 2h16v16H2z" strokeDasharray="4 3" strokeWidth="2" /><path d="M6 6h8v8H6z" fill={TEAL} stroke="none" /></Icon></button>
            <button type="button" aria-label="锁定选择"><Icon size={10}><path d="M3 9h14v10H3z" fill="#ddd" stroke="none" /><path d="M6 9V5a4 4 0 0 1 8 0v4" stroke="#ddd" strokeWidth="2.500" /><path d="M10 12v4" stroke="#333" /></Icon></button>
            <button type="button" aria-label="绝对模式"><Icon size={11}><path d="M2 7V2h5M13 2h5v5M18 13v5h-5M7 18H2v-5M10 5v3M10 12v3M5 10h3M12 10h3" strokeWidth="2.500" /><circle cx="10" cy="10" r="4" /></Icon></button>
          </div>
          <Coord axis="X" value="-0.074m" />
          <Coord axis="Y" value="-127.858m" />
          <Coord axis="Z" value="0.0m" />
          <span className="text-[7px] text-white">栅格 = 10.0m</span>
        </div>
      </div>
      <div className="flex h-4 items-center justify-end">
        <span className="absolute left-[99px]">间&nbsp; 0:01:19</span>
        <button type="button" className="mr-[342px] flex items-center gap-1 border-l border-black pl-1">
          <svg width="9" height="9" viewBox="0 0 10 10" fill="none" stroke="#ccc"><path d="M5 1l4 2v4L5 9 1 7V3zM1 3l4 2 4-2M5 5v4" /></svg>
          添加时间标记
        </button>
      </div>
      <div className="flex h-[2px] bg-[#22303a]"><div className="ml-[14%] w-8 bg-[#59646c]" /><div className="ml-auto mr-[351px] w-8 bg-[#b8683a]" /></div>
      <div className="absolute bottom-[3px] left-[6px] flex h-[17px] w-[94px] items-center justify-around bg-white">
        <svg width="14" height="9" viewBox="0 0 14 9" aria-hidden="true"><path d="M.5.5h9v8h-9z" fill="#eef" stroke="#999" /><path d="M2 2h3v5H2z" fill="#2b8f83" /><path d="M8 2h5v2h-2v4H9z" fill="#ddd" stroke="#999" /></svg>
        <button type="button" aria-label="最大化"><svg width="7" height="7" viewBox="0 0 7 7" fill="none" stroke="#999"><path d="M.5.5h6v6h-6z" /></svg></button>
        <button type="button" aria-label="关闭窗口"><svg width="7" height="7" viewBox="0 0 7 7" stroke="#888"><path d="M0 0l7 7M7 0L0 7" /></svg></button>
      </div>
    </footer>
  );
}

function SiteBadge() {
  return (
    <a href="#civilcn" className="absolute bottom-0 right-px z-20 flex h-[166px] w-[327px] items-center bg-[#fdfdfd] pl-[26px]">
      <svg width="90" height="74" viewBox="0 0 90 74" className="mb-1 shrink-0" aria-hidden="true">
        <path d="M7 31C20 6 50-3 68 2s24 16 18 29l-3 1C86 17 78 9 62 8 42 6 20 15 7 31z" fill="#96c11f" />
        <path d="M3 37c-1 15 12 25 30 25 24 0 45-13 55-31-2 16-23 35-46 40C18 76-3 62 3 37z" fill="#123f97" />
        <path d="M45 15l14 10v28l-14 5zM67 30l15 9-15 13z" fill="#d3d5da" />
        <path d="M27 20l17-8v46c-6 2-12 2-17 0zM7 44l13-7v19C15 55 10 50 7 44zM53 36l13-7v23c-4 3-9 5-13 5z" fill="#164a9f" />
      </svg>
      <span className="-ml-px flex flex-col whitespace-nowrap italic text-black">
        <strong className="font-[Noto_Sans_CJK_SC,sans-serif] text-[36px] font-black leading-[36px]">土木工程网</strong>
        <span className="font-[Noto_Sans,sans-serif] text-[24px] font-medium leading-[24px]">www.civilcn.com</span>
      </span>
    </a>
  );
}

export default function App() {
  return (
    <div className="relative flex min-h-screen flex-col overflow-hidden bg-[#444] font-[Liberation_Mono,Noto_Sans_CJK_SC,monospace] text-[8px]">
      <TitleBar />
      <MenuBar />
      <Toolbar />
      <Ribbon />
      <div className="flex flex-1">
        <LeftBars />
        <Viewport />
        <ScriptBar />
        <CommandPanel />
      </div>
      <TimeBars />
      <StatusBar />
      <SiteBadge />
    </div>
  );
}
